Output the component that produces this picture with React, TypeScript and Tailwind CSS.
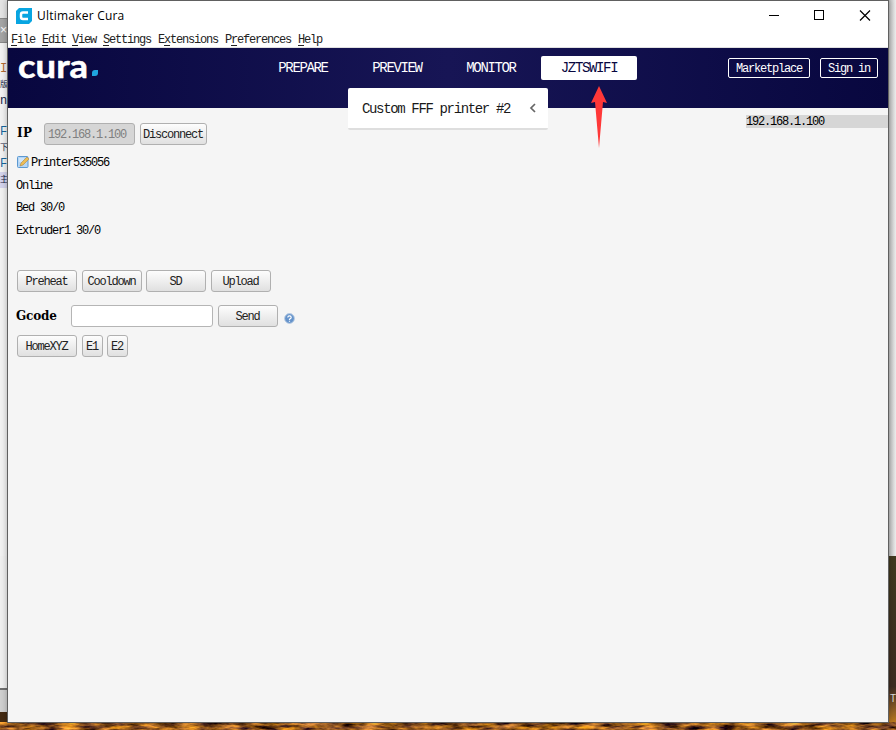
import React from "react";

const mono = "font-['Liberation_Mono','DejaVu_Sans_Mono',monospace]";
const t12 = "text-[12px] tracking-[-1.2px] leading-[14px] whitespace-pre";
const t14 = "text-[14px] tracking-[-1.35px] leading-[16px] whitespace-pre";
const heading = "font-['DejaVu_Serif',serif] text-[12px] leading-[14px] font-bold";

function Btn({ children, w }: { children: React.ReactNode; w: string }) {
  return (
    <button
      className={`flex h-[22px] items-center justify-center rounded-[3px] border border-[#b0b0b0] bg-linear-to-b from-[#fdfdfd] to-[#e0e0e0] pt-px pr-px text-[#222] ${t12} ${w}`}
    >
      {children}
    </button>
  );
}

function MenuItem({ pre = "", k, post, w }: { pre?: string; k: string; post: string; w: string }) {
  return (
    <span className={w}>
      {pre}
      <span className="underline underline-offset-2">{k}</span>
      {post}
    </span>
  );
}

function Desktop() {
  return (
    <div className="absolute inset-0 flex flex-col bg-[#ececec]">
      <div className="flex h-[556px] justify-between">
        <div className="w-2 bg-[#f2f2f2] font-['Liberation_Mono','Noto_Sans_CJK_SC',monospace] text-[12px] leading-[16px] text-[#124]">
          <div className="h-[18px] bg-[#e4e4e4]" />
          <div className="flex h-[25px] items-center border-y border-[#888] bg-[#a5a5a5] text-white">×</div>
          <div className="mt-[18px] text-[#b26b32]">I</div>
          <div className="text-[8px]">版</div>
          <div>n</div>
          <div className="mt-[15px] text-[#17649b]">F</div>
          <div className="text-[8px]">下</div>
          <div className="text-[#17649b]">F</div>
          <div className="bg-[#d4d4ec] text-[8px]">主</div>
        </div>
        <div className="w-[7px] bg-linear-to-r from-[#bdbdbd] to-[#ededed]" />
      </div>
      <div className="flex flex-1 justify-between">
        <div className="flex w-2 flex-col bg-[#f0f0f0]">
          <div className="mt-[132px] h-[2px] bg-[#707070]" />
          <div className="flex-1 bg-[#d0d0d0]" />
          <div className="h-[18px] bg-[#442a12]" />
        </div>
        <div className="w-2 bg-linear-to-b from-[#40391f] via-[#3d2b21] via-75% to-[#d98b0d]">
          <div className="mt-[136px] pl-[2px] font-['Liberation_Sans',sans-serif] text-[10px] leading-[14px] text-[#ddd]">T</div>
        </div>
      </div>
      <svg className="absolute bottom-0 left-0" width="896" height="8">
        <defs>
          <filter id="sand" x="0" y="0" width="100%" height="100%" colorInterpolationFilters="sRGB">
            <feTurbulence type="fractalNoise" baseFrequency="0.05 0.25" numOctaves="4" seed="4" />
            <feColorMatrix values="1.7 0 0 0 -0.25  1.2 0 0 0 -0.24  0.3 0.3 0 0 -0.18  0 0 0 0 1" />
          </filter>
        </defs>
        <rect width="896" height="8" filter="url(#sand)" />
      </svg>
    </div>
  );
}

function TitleBar() {
  return (
    <div className="flex h-[30px] items-center justify-between pl-2">
      <div className="flex items-center gap-[5px]">
        <svg width="16" height="16" viewBox="0 0 16 16">
          <path d="M3 0H16V13L13 16H0V3Z" fill="#08a5e1" />
          <path d="M12 4.500H7Q5 4.500 5 6.500V9Q5 11 7 11H12" fill="none" stroke="#fff" strokeWidth="2.500" />
        </svg>
        <span className="font-['Open_Sans','Noto_Sans',sans-serif] text-[12px] leading-[16px] tracking-[0.22px] text-black">Ultimaker Cura</span>
      </div>
      <svg width="119" height="30" fill="none" stroke="#000" shapeRendering="crispEdges">
        <path d="M0 14.500H10" />
        <rect x="45.500" y="9.500" width="9" height="9" />
        <path d="M91 9.500L101 19.500M101 9.500L91 19.500" shapeRendering="auto" strokeWidth="1.200" />
      </svg>
    </div>
  );
}

function Header() {
  return (
    <header className="flex h-[60px] items-start bg-linear-to-r from-[#08073f] via-[#171555] to-[#08073f] text-white">
      <svg className="mt-[8px] ml-[9px] shrink-0" width="84" height="26">
        <text x="1" y="21.500" textLength="70" lengthAdjust="spacingAndGlyphs" fill="#fff" stroke="#fff" strokeWidth="0.500" fontSize="32" fontWeight="700" fontFamily="Lato, sans-serif">cura</text>
        <path d="M75 20V17Q75 14 78 14H81V17Q81 20 78 20Z" fill="#1fa5df" />
      </svg>
      <nav className={`mt-2 ml-[155px] flex h-6 ${t14}`}>
        <span className="flex w-[94px] items-center justify-center">PREPARE</span>
        <span className="flex w-[94px] items-center justify-center">PREVIEW</span>
        <span className="flex w-[94px] items-center justify-center">MONITOR</span>
        <span className="ml-[3px] flex w-[96px] items-center justify-center rounded-[2px] bg-white text-[#08073f]">JZTSWIFI</span>
      </nav>
      <div className={`mt-[10px] ml-[91px] flex gap-[10px] ${t12}`}>
        <span className="flex h-5 w-[82px] items-center justify-center rounded-[2px] border border-white pt-px">Marketplace</span>
        <span className="flex h-5 w-[58px] items-center justify-center rounded-[2px] border border-white pt-px">Sign in</span>
      </div>
    </header>
  );
}

function PrinterPanel() {
  return (
    <main className={`flex flex-col pl-2 text-black ${t12}`}>
      <div className="mt-[15px] flex h-[22px] items-center">
        <span className={`w-7 pb-[2px] pl-px tracking-[0.4px] ${heading}`}>IP</span>
        <div className="flex h-[22px] w-[91px] items-center rounded-[3px] border border-[#b0b0b0] bg-[#d6d6d6] pt-px pl-[3px] text-[#808080]">192.168.1.100</div>
        <div className="w-[5px]" />
        <Btn w="w-[67px]">Disconnect</Btn>
      </div>
      <div className="mt-[10px] flex h-[14px] items-center gap-[2px] pl-[1px]">
        <svg width="12" height="12" viewBox="0 0 12 12">
          <rect x="0.500" y="0.500" width="10.500" height="11" rx="1" fill="#b5d6f5" stroke="#5c99d1" />
          <path d="M2 3H7M2 5H6" stroke="#e8f4ff" />
          <path d="M3 10L4 7L10 1L12 3L6 9Z" fill="#edbd55" stroke="#a87a32" strokeWidth="0.500" />
        </svg>
        <span className="pt-px">Printer535056</span>
      </div>
      <div className="mt-[10px]">Online</div>
      <div className="mt-[8px]">Bed 30/0</div>
      <div className="mt-[9px]">Extruder1 30/0</div>
      <div className="mt-[32px] flex gap-[5px] pl-px">
        <Btn w="w-[60px]">Preheat</Btn>
        <Btn w="w-[60px]">Cooldown</Btn>
        <Btn w="w-[60px] -ml-px">SD</Btn>
        <Btn w="w-[60px]">Upload</Btn>
      </div>
      <div className="mt-[13px] flex items-center">
        <span className={`w-[55px] tracking-[-0.15px] ${heading}`}>Gcode</span>
        <div className="h-[22px] w-[142px] rounded-[3px] border border-[#b5b5b5] bg-white" />
        <div className="w-[5px]" />
        <Btn w="w-[60px]">Send</Btn>
        <svg className="mt-[4px] ml-[6px]" width="11" height="11" viewBox="0 0 11 11">
          <circle cx="5.500" cy="5.500" r="4.900" fill="#6593cb" stroke="#b9cce3" />
          <path d="M3.800 4.600Q3.800 2.800 5.500 2.800T7.200 4.400Q7.200 5.300 5.500 6.200V7M5.500 7.700V8.700" fill="none" stroke="#fff" strokeWidth="1.200" />
        </svg>
      </div>
      <div className="mt-[8px] flex gap-[5px] pl-px">
        <Btn w="w-[60px]">HomeXYZ</Btn>
        <Btn w="w-[21px]">E1</Btn>
        <Btn w="w-[21px] -ml-px">E2</Btn>
      </div>
    </main>
  );
}

export default function App() {
  return (
    <div className={`relative h-[730px] w-[896px] overflow-hidden ${mono}`}>
      <Desktop />
      <div className="absolute top-0 left-[7px] flex h-[723px] w-[882px] flex-col border border-[#606060] bg-[#f5f5f5] shadow-[0_0_6px_rgba(0,0,0,0.3)]">
        <div className="h-[47px] border-b border-[#e0e0e0] bg-white">
          <TitleBar />
          <div className={`mt-[2px] flex pl-[3px] text-[#222] ${t12}`}>
            <MenuItem k="F" post="ile" w="w-[31px]" />
            <MenuItem k="E" post="dit" w="w-[30px]" />
            <MenuItem k="V" post="iew" w="w-[31px]" />
            <MenuItem k="S" post="ettings" w="w-[55px]" />
            <MenuItem pre="E" k="x" post="tensions" w="w-[67px]" />
            <MenuItem pre="P" k="r" post="eferences" w="w-[73px]" />
            <MenuItem k="H" post="elp" w="w-[30px]" />
          </div>
        </div>
        <Header />
        <PrinterPanel />
        <div className={`absolute top-[87px] left-[340px] flex h-[42px] w-[200px] items-center justify-between rounded-[2px] border-b-2 border-[#dedede] bg-white pr-[11px] pl-[14px] text-[#191919] ${t14}`}>
          <span className="pt-px">Custom FFF printer #2</span>
          <svg width="8" height="10" viewBox="0 0 8 10" fill="none" stroke="#666" strokeWidth="1.700">
            <path d="M6 1L2 5L6 9" />
          </svg>
        </div>
        <svg className="absolute top-[84px] left-[582px]" width="18" height="64" viewBox="0 0 18 64">
          <path d="M9 1L17 18L13 17L9 63L5 17L1 18Z" fill="#ff3838" />
        </svg>
        <div className={`absolute top-[114px] right-0 h-[13px] w-[142px] bg-[#d6d6d6] text-black ${t12}`}>192.168.1.100</div>
      </div>
    </div>
  );
}
